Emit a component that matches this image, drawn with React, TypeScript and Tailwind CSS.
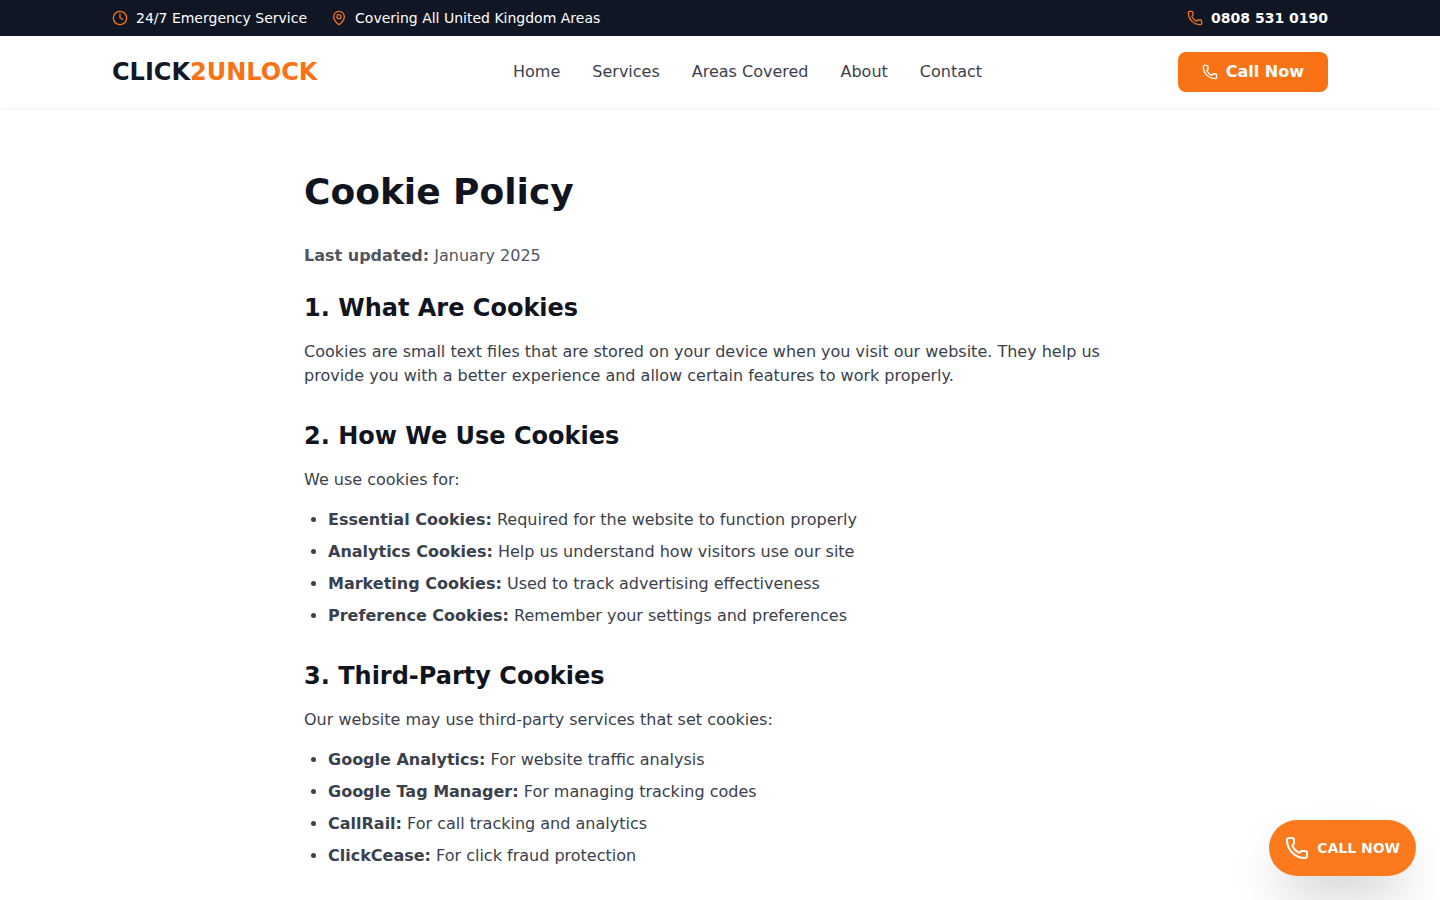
import React from 'react';
import { Clock, MapPin, Phone } from 'lucide-react';

const PHONE = '0808 531 0190';
const PHONE_HREF = 'tel:08085310190';

const navLinks = ['Home', 'Services', 'Areas Covered', 'About', 'Contact'];

const usageCookies = [
  { name: 'Essential Cookies:', text: 'Required for the website to function properly' },
  { name: 'Analytics Cookies:', text: 'Help us understand how visitors use our site' },
  { name: 'Marketing Cookies:', text: 'Used to track advertising effectiveness' },
  { name: 'Preference Cookies:', text: 'Remember your settings and preferences' },
];

const thirdParties = [
  { name: 'Google Analytics:', text: 'For website traffic analysis' },
  { name: 'Google Tag Manager:', text: 'For managing tracking codes' },
  { name: 'CallRail:', text: 'For call tracking and analytics' },
  { name: 'ClickCease:', text: 'For click fraud protection' },
];

const TopBar: React.FC = () => (
  <div className="bg-[#101624] text-white text-sm">
    <div className="max-w-7xl mx-auto px-8 py-2 flex justify-between items-center">
      <div className="flex items-center gap-6">
        <div className="flex items-center gap-2">
          <Clock className="w-4 h-4 text-[#f97316]" />
          <span>24/7 Emergency Service</span>
        </div>
        <div className="flex items-center gap-2">
          <MapPin className="w-4 h-4 text-[#f97316]" />
          <span>Covering All United Kingdom Areas</span>
        </div>
      </div>
      <a href={PHONE_HREF} className="flex items-center gap-2 font-bold">
        <Phone className="w-4 h-4 text-[#f97316]" />
        {PHONE}
      </a>
    </div>
  </div>
);

const Header: React.FC = () => (
  <header className="bg-white shadow-xs">
    <div className="max-w-7xl mx-auto px-8 py-4 flex justify-between items-center">
      <a href="#home" className="text-2xl font-bold text-[#111827]">
        CLICK<span className="text-[#f97316]">2UNLOCK</span>
      </a>
      <nav className="flex items-center gap-8">
        {navLinks.map((label) => (
          <a key={label} href="#" className="text-[#3a414c] hover:text-orange-500">
            {label}
          </a>
        ))}
      </nav>
      <a
        href={PHONE_HREF}
        className="flex items-center gap-2 bg-[#f97316] text-white font-semibold px-6 py-2 rounded-lg"
      >
        <Phone className="w-4 h-4" />
        Call Now
      </a>
    </div>
  </header>
);

const CookieList: React.FC<{ items: { name: string; text: string }[] }> = ({ items }) => (
  <ul className="list-disc pl-6 mt-4 space-y-2">
    {items.map((item) => (
      <li key={item.name}>
        <strong>{item.name}</strong> {item.text}
      </li>
    ))}
  </ul>
);

const Section: React.FC<{ title: string; children: React.ReactNode }> = ({ title, children }) => (
  <section>
    <h2 className="text-2xl font-bold text-[#111520] mb-4">{title}</h2>
    {children}
  </section>
);

const App: React.FC = () => (
  <div className="min-h-screen bg-white font-['DejaVu_Sans',sans-serif]">
    <TopBar />
    <Header />

    <main className="max-w-4xl mx-auto px-8 py-16">
      <h1 className="text-4xl font-bold text-[#111520] mb-8">Cookie Policy</h1>
      <p className="text-[#50565f] mb-6">
        <strong>Last updated:</strong> January 2025
      </p>

      <div className="space-y-8 text-[#3a414c]">
        <Section title="1. What Are Cookies">
          <p>
            Cookies are small text files that are stored on your device when you visit our website.
            They help us provide you with a better experience and allow certain features to work
            properly.
          </p>
        </Section>

        <Section title="2. How We Use Cookies">
          <p>We use cookies for:</p>
          <CookieList items={usageCookies} />
        </Section>

        <Section title="3. Third-Party Cookies">
          <p>Our website may use third-party services that set cookies:</p>
          <CookieList items={thirdParties} />
        </Section>
      </div>
    </main>

    {/* Floating call button */}
    <a
      href={PHONE_HREF}
      className="fixed bottom-6 right-6 flex items-center gap-2 bg-[#fb7a1e] text-white text-sm font-bold p-4 rounded-full shadow-2xl"
    >
      <Phone className="w-6 h-6" />
      CALL NOW
    </a>
  </div>
);

export default App;
